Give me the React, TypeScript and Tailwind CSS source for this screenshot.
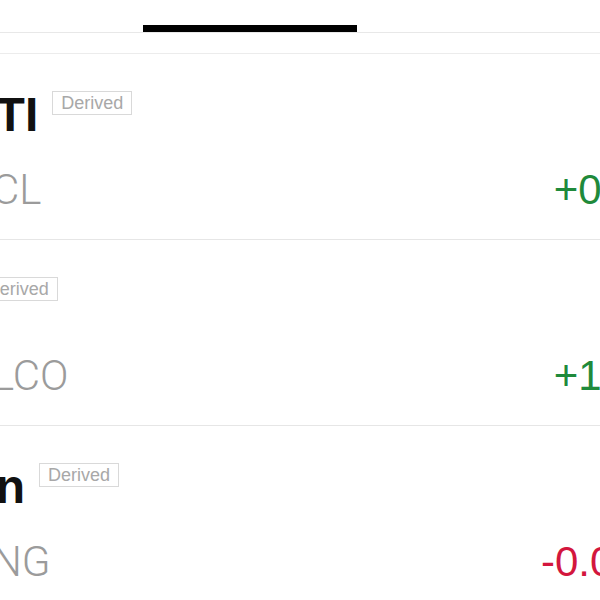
const tabs = ["Stocks", "Indices", "Commodities", "FX"];

type Quote = {
  name: string;
  exchange: string;
  ticker: string;
  change: string;
  up: boolean;
};

const quotes: Quote[] = [
  { name: "Cushing WTI", exchange: "NYMEX", ticker: "CL", change: "+0.62", up: true },
  { name: "ICE Brent", exchange: "ICE", ticker: "LCO", change: "+1.23", up: true },
  { name: "Nat Gas Jun", exchange: "NYMEX", ticker: "NG", change: "-0.063", up: false },
];

function QuoteRow({ q }: { q: Quote }) {
  return (
    <div className="border-b border-[#e6e6e6] pb-[28px] pl-[45px] pr-[40px] pt-[37px]">
      <div className="flex items-start">
        <span className="text-[48px] font-bold leading-none text-[#111]">{q.name}</span>
        <span className="ml-[14px] border border-[#d9d9d9] px-2 text-[18px] leading-[22px] text-[#a8a8a8]">
          Derived
        </span>
      </div>
      <div className="mt-[30px] flex items-baseline text-[42px] leading-none">
        <span className="w-[247px] shrink-0 font-['Roboto',sans-serif] font-light text-[#9b9b9b]">
          {q.exchange}
        </span>
        <span className="font-['Roboto',sans-serif] font-light text-[#9b9b9b]">{q.ticker}</span>
        <span className={`ml-auto ${q.up ? "text-[#1f8a3b]" : "text-[#d3163d]"}`}>{q.change}</span>
      </div>
    </div>
  );
}

export default function App() {
  return (
    <div className="h-[600px] w-[600px] overflow-hidden bg-white font-['Liberation_Sans',Arial,sans-serif]">
      <div className="-ml-[300px] w-[1000px]">
        {/* tab bar, labels sit above the visible area */}
        <nav className="-mt-[60px] flex h-[93px] border-b border-[#e8e8e8] px-[15px]">
          {tabs.map((t, i) => (
            <div key={t} className="flex w-[214px] flex-col justify-between">
              <span className="pt-4 text-center text-[22px] text-[#555]">{t}</span>
              {i === 2 ? <span className="h-[7px] bg-black" /> : null}
            </div>
          ))}
        </nav>
        <div className="h-[21px] border-b border-[#ececec]" />
        {quotes.map((q) => (
          <QuoteRow key={q.ticker} q={q} />
        ))}
      </div>
    </div>
  );
}
